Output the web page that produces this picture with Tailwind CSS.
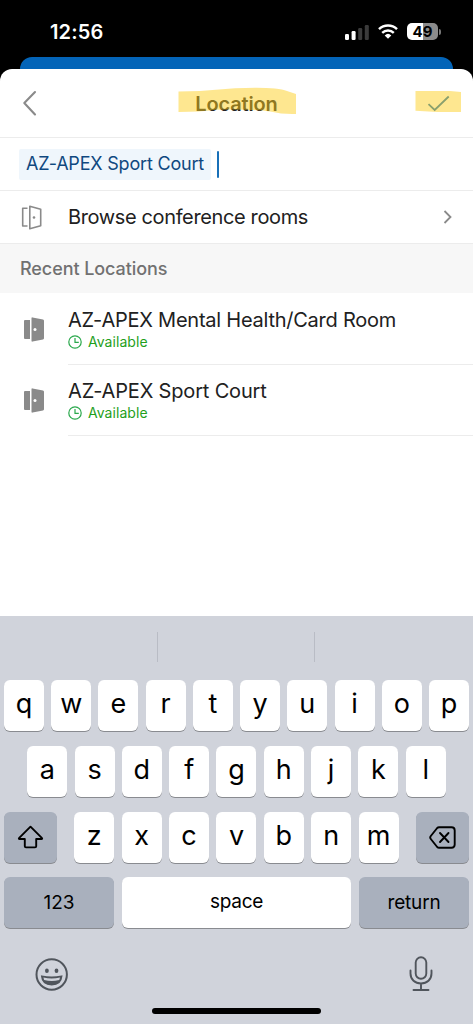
<!DOCTYPE html>
<html lang="en">
<head>
<meta charset="utf-8">
<meta name="viewport" content="width=device-width, initial-scale=1">
<title>Location</title>
<script src="https://cdn.jsdelivr.net/npm/@tailwindcss/browser@4"></script>
</head>
<body class="bg-black">
<div class="w-[473px] h-[1024px] overflow-hidden bg-black flex flex-col font-[Inter,sans-serif] text-[#212121]">

  <!-- Status bar -->
  <header class="h-[57px] shrink-0 flex items-start justify-between pl-[50px] pr-[32px] text-white">
    <div class="pt-[18px] text-[20px] leading-[28px] font-semibold tracking-[0.15px]">12:56</div>
    <div class="flex items-center pt-[23px]">
      <svg class="w-[24px] h-[16px]" viewBox="0 0 24 16"><rect x="0" y="10" width="4" height="6" rx="1.2" fill="#fff"/><rect x="6.6" y="7" width="4" height="9" rx="1.2" fill="#fff"/><rect x="13.2" y="4" width="4" height="12" rx="1.2" fill="#3b3b3b"/><rect x="19.8" y="1" width="4" height="15" rx="1.2" fill="#3b3b3b"/></svg>
      <svg class="w-[20px] h-[15px] ml-[9px]" viewBox="0 0 20 15" fill="none" stroke="#fff"><path d="M1 5.2a13 13 0 0 1 18 0" stroke-width="2.5"/><path d="M4.2 8.8a8.4 8.4 0 0 1 11.600 0" stroke-width="2.400"/><path d="M10 14.800 6.700 11.400a4.800 4.800 0 0 1 6.600 0Z" fill="#fff" stroke="none"/></svg>
      <div class="ml-[9px] w-[31px] h-[17px] rounded-[5px] bg-linear-to-r from-white from-50% to-[#8b8b8b] to-50% text-black text-[15px] leading-[17px] font-bold text-center">49</div>
      <div class="ml-[1px] w-[2px] h-[6px] rounded-r-full bg-[#777]"></div>
    </div>
  </header>

  <div class="h-[12px] shrink-0 mx-[20px] rounded-t-[12px] bg-[#0364b8]"></div>

  <!-- Sheet -->
  <main class="h-[547px] shrink-0 bg-white rounded-t-[12px] flex flex-col">
    <div class="h-[69px] shrink-0 border-b border-[#ececec] relative flex items-center justify-center">
      <svg class="absolute left-[22px] top-[21px] w-[16px] h-[26px]" viewBox="0 0 16 26" fill="none" stroke="#8a8a8a" stroke-width="2.1" stroke-linecap="round" stroke-linejoin="round"><path d="M13 2 2.300 13 13 24.500"/></svg>
      <h1 class="pt-px text-[20px] leading-[26px] font-semibold tracking-[-0.15px]">Location</h1>
      <svg class="absolute left-[427px] top-[26px] w-[24px] h-[18px]" viewBox="0 0 24 18" fill="none" stroke="#1670b8" stroke-width="1.800"><path d="M1.500 9.200 7.700 15 21.700 1.500"/></svg>
      <svg class="absolute left-0 top-0 w-[473px] h-[68px]" viewBox="0 69 473 68" fill="#fdcf21" fill-opacity=".5"><path d="M178.500 91.600 200 91 235 88.300Q275 86.500 287 91L296 94V114Q283 114.500 270 111.500 250 108.800 215 109.800 200 112 178.500 112Z"/><path d="M415.500 91H450L461 92V112H437L415.500 110.700Z"/></svg>
    </div>

    <div class="h-[53px] shrink-0 border-b border-[#ececec] flex items-center pl-[19px]">
      <div class="w-[192px] h-[31px] mt-px rounded-[2px] bg-[#eff6fc] text-[#0f4880] text-[18px] leading-[30px] pl-[7px] whitespace-nowrap tracking-[-0.190px]">AZ-APEX Sport Court</div>
      <div class="ml-[5.500px] w-[2.500px] h-[27px] rounded-full bg-[#1870b8]"></div>
    </div>

    <div class="h-[53px] shrink-0 border-b border-[#ececec] flex items-center pr-[21px]">
      <svg class="ml-[21px] w-[21px] h-[25px]" viewBox="0 0 21 25" fill="none" stroke="#8a8a8a" stroke-width="1.600" stroke-linejoin="round"><path d="M6.500 3.300H1.700V21H6.500"/><path d="M8.800 1.200 19.700 4.200V20.700L8.800 23.700Z"/><circle cx="13" cy="12.500" r="1.300" fill="#8a8a8a" stroke="none"/></svg>
      <div class="ml-[26px] text-[20px] whitespace-nowrap tracking-[-0.370px]">Browse conference rooms</div>
      <svg class="ml-auto w-[9px] h-[14px]" viewBox="0 0 9 14" fill="none" stroke="#8a8a8a" stroke-width="1.800"><path d="M1.500 1 7.500 7 1.500 13"/></svg>
    </div>

    <div class="h-[49px] shrink-0 bg-[#f7f7f7] flex items-center pl-[20px] text-[18px] text-[#717171] tracking-[-0.080px] font-[450]">Recent Locations</div>

    <div class="h-[72px] shrink-0 flex">
      <svg class="ml-[23px] mt-[24px] w-[22px] h-[25px] shrink-0" viewBox="0 0 22 25" fill="#8a8a8a"><path d="M2 3H7V22H2Q1 22 1 21V4Q1 3 2 3Z"/><path d="M8.500 1.200Q8.500.2 9.500.4L20 2.500Q21 2.700 21 3.700V21.300Q21 22.300 20 22.500L9.500 24.600Q8.500 24.800 8.500 23.800Z"/><circle cx="12" cy="12.500" r="1.500" fill="#fff"/></svg>
      <div class="ml-[23px] flex-1 border-b border-[#ececec] pt-[15px]">
        <div class="text-[20px] leading-[25px] whitespace-nowrap tracking-[-0.240px]">AZ-APEX Mental Health/Card Room</div>
        <div class="flex items-center gap-[6px] text-[14px] leading-[18px] text-[#1fa01c] tracking-[0.050px]">
          <svg class="w-[14px] h-[14px]" viewBox="0 0 14 14" fill="none" stroke="#2aa84c" stroke-width="1.200"><circle cx="7" cy="7" r="6.200"/><path d="M7 3V7.300H10.800"/></svg>Available</div>
      </div>
    </div>
    <div class="h-[71px] shrink-0 flex">
      <svg class="ml-[23px] mt-[23px] w-[22px] h-[25px] shrink-0" viewBox="0 0 22 25" fill="#8a8a8a"><path d="M2 3H7V22H2Q1 22 1 21V4Q1 3 2 3Z"/><path d="M8.500 1.200Q8.500.2 9.500.4L20 2.500Q21 2.700 21 3.700V21.300Q21 22.300 20 22.500L9.500 24.600Q8.500 24.800 8.500 23.800Z"/><circle cx="12" cy="12.500" r="1.500" fill="#fff"/></svg>
      <div class="ml-[23px] flex-1 border-b border-[#ececec] pt-[14px]">
        <div class="text-[20px] leading-[25px] whitespace-nowrap tracking-[-0.170px]">AZ-APEX Sport Court</div>
        <div class="flex items-center gap-[6px] text-[14px] leading-[18px] text-[#1fa01c] tracking-[0.050px]">
          <svg class="w-[14px] h-[14px]" viewBox="0 0 14 14" fill="none" stroke="#2aa84c" stroke-width="1.200"><circle cx="7" cy="7" r="6.200"/><path d="M7 3V7.300H10.800"/></svg>Available</div>
      </div>
    </div>
  </main>

  <!-- Keyboard -->
  <section class="h-[408px] shrink-0 bg-[#d0d3db] flex flex-col text-black">
    <div class="h-[64.400px] shrink-0 flex pt-[16px]">
      <div class="w-[158px] h-[30px] border-r border-[#b9bcc5]"></div>
      <div class="w-[157px] h-[30px] border-r border-[#b9bcc5]"></div>
    </div>
    <div class="px-[4px] flex flex-col gap-[14.600px] text-[27px] leading-[48px] text-center [&_b]:font-[380] [&_b]:w-[40px] [&_b]:h-[51px] [&_b]:bg-white [&_b]:rounded-[6px] [&_b]:shadow-[0_1px_0_#898b90]">
      <div class="flex justify-between"><b>q</b><b>w</b><b>e</b><b>r</b><b>t</b><b>y</b><b>u</b><b>i</b><b>o</b><b>p</b></div>
      <div class="flex justify-between px-[23.300px]"><b>a</b><b>s</b><b>d</b><b>f</b><b>g</b><b>h</b><b>j</b><b>k</b><b>l</b></div>
      <div class="flex justify-between">
        <div class="w-[53px] h-[51px] rounded-[6px] bg-[#a9b0bd] shadow-[0_1px_0_#898b90] flex items-center justify-center">
          <svg class="w-[27px] h-[24px]" viewBox="0 0 27 24" fill="none" stroke="#000" stroke-width="1.900" stroke-linejoin="round"><path d="M13.500 1.700 25 13.200Q25.500 14 24.500 14H19.200V21.200Q19.200 22.400 18 22.400H9Q7.800 22.400 7.800 21.200V14H2.500Q1.500 14 2 13.200Z"/></svg>
        </div>
        <div class="w-[324.500px] flex justify-between"><b>z</b><b>x</b><b>c</b><b>v</b><b>b</b><b>n</b><b>m</b></div>
        <div class="w-[53px] h-[51px] rounded-[6px] bg-[#a9b0bd] shadow-[0_1px_0_#898b90] flex items-center justify-center">
          <svg class="w-[27px] h-[23px]" viewBox="0 0 27 23" fill="none" stroke="#000" stroke-width="1.900" stroke-linecap="round" stroke-linejoin="round"><path d="M10 1.200H22.500Q25.700 1.200 25.700 4.400V18.600Q25.700 21.800 22.500 21.800H10Q9 21.800 8.200 21L1.800 13Q.6 11.500 1.800 10L8.200 2Q9 1.200 10 1.200Z"/><path d="M11 7 19.500 16M19.500 7 11 16"/></svg>
        </div>
      </div>
      <div class="flex justify-between text-[19px]">
        <div class="w-[110px] h-[51px] rounded-[6px] bg-[#a9b0bd] shadow-[0_1px_0_#898b90] leading-[52px]">123</div>
        <div class="w-[229.500px] h-[51px] rounded-[6px] bg-white shadow-[0_1px_0_#898b90] leading-[49px] tracking-[-0.300px]">space</div>
        <div class="w-[110px] h-[51px] rounded-[6px] bg-[#a9b0bd] shadow-[0_1px_0_#898b90] leading-[52px] tracking-[-0.200px]">return</div>
      </div>
    </div>
    <div class="flex justify-between items-start pl-[35px] pr-[40px] pt-[28px]">
      <svg class="mt-[2px] w-[34px] h-[34px]" viewBox="0 0 34 34" fill="none" stroke="#50555c"><circle cx="16.700" cy="16.500" r="15.200" stroke-width="2"/><ellipse cx="11.900" cy="12.800" rx="1.900" ry="2.200" fill="#50555c" stroke="none"/><ellipse cx="21.500" cy="12.800" rx="1.900" ry="2.200" fill="#50555c" stroke="none"/><path d="M6.700 18.200Q16.700 20.200 26.700 18.200 26 26.700 16.700 26.700T6.700 18.200Z" stroke-width="1.400" fill="#50555c"/><path d="M8.400 19.600Q16.700 21.400 25 19.600L24.300 22Q16.700 24 9.100 22Z" fill="#d0d3db" stroke="none"/></svg>
      <svg class="w-[24px] h-[36px]" viewBox="0 0 24 36" fill="none" stroke="#50555c" stroke-width="1.900" stroke-linecap="round"><rect x="6.700" y="1.300" width="10.600" height="21.500" rx="5.300"/><path d="M1.500 14.500V17.500C1.500 23.500 6 27.500 12 27.500S22.500 23.500 22.500 17.500V14.500M12 27.500V34M4.500 34H19.500"/></svg>
    </div>
    <div class="mt-auto mb-[10px] mx-auto w-[169px] h-[6px] rounded-full bg-black"></div>
  </section>
</div>
</body>
</html>
